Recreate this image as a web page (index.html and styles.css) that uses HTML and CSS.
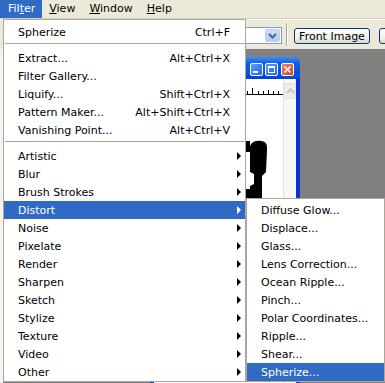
FILE: index.html
```html
<!DOCTYPE html>
<html>
<head>
<meta charset="utf-8">
<link rel="stylesheet" href="styles.css">
</head>
<body>
<div class="menubar">
  <span class="mb-item active">Fil<u>t</u>er</span>
  <span class="mb-item"><u>V</u>iew</span>
  <span class="mb-item"><u>W</u>indow</span>
  <span class="mb-item"><u>H</u>elp</span>
</div>
<div class="toolbar">
  <div class="combo">
    <div class="combo-btn">
      <svg width="9" height="6" viewBox="0 0 9 6"><path d="M1 1 L4.5 4.5 L8 1" fill="none" stroke="#4d6185" stroke-width="2"/></svg>
    </div>
  </div>
  <div class="tb-sep"></div>
  <button class="xpbtn front">Front Image</button>
  <button class="xpbtn clear"></button>
</div>
<div class="workspace">
  <div class="leftdoc"></div>
  <div class="docwin">
    <div class="titlebar">
      <span class="cap-btn min"><svg width="13" height="13" viewBox="0 0 13 13"><rect x="3" y="8" width="5" height="2" fill="#fff"/></svg></span>
      <span class="cap-btn max"><svg width="13" height="13" viewBox="0 0 13 13"><rect x="3.5" y="3.5" width="6" height="6" fill="none" stroke="#fff" stroke-width="1"/><rect x="3" y="3" width="7" height="2" fill="#fff"/></svg></span>
      <span class="cap-btn close"><svg width="13" height="13" viewBox="0 0 13 13"><path d="M3.5 3.5 L9.5 9.5 M9.5 3.5 L3.5 9.5" stroke="#fff" stroke-width="1.6"/></svg></span>
    </div>
    <div class="docbody">
      <div class="canvas">
        <svg class="art" width="129" height="130" viewBox="0 0 129 130">
          <path d="M0 15.5 H129" stroke="#000" stroke-width="1"/>
          <path d="M98.5 9 V15 M104.5 12 V15 M109.5 12 V15 M114.5 11 V15 M119.5 12 V15 M124.5 12 V15 M93.5 12 V15 M88.5 12 V15" stroke="#000" stroke-width="1"/>
          <path d="M96 67 Q98 61 108 62 Q114 63 113 71 L112 93 L108 97 L108 122 L96 122 L96 107 L100 105 L100 95 L96 93 Z" fill="#000"/>
          <path d="M92 62 L96 62 L96 73 L92 73 Z M92 110 L96 110 L96 120 L92 120 Z" fill="#000"/>
        </svg>
      </div>
      <div class="vscroll">
        <div class="sb-up"><svg width="9" height="6" viewBox="0 0 9 6"><path d="M1 5 L4.5 1.5 L8 5" fill="none" stroke="#c3c3bd" stroke-width="2"/></svg></div>
      </div>
    </div>
  </div>
</div>

<div class="menu main">
  <div class="item"><span class="label">Spherize</span><span class="key">Ctrl+F</span></div>
  <div class="sep"></div>
  <div class="item"><span class="label">Extract...</span><span class="key">Alt+Ctrl+X</span></div>
  <div class="item"><span class="label">Filter Gallery...</span></div>
  <div class="item"><span class="label">Liquify...</span><span class="key">Shift+Ctrl+X</span></div>
  <div class="item"><span class="label">Pattern Maker...</span><span class="key">Alt+Shift+Ctrl+X</span></div>
  <div class="item"><span class="label">Vanishing Point...</span><span class="key">Alt+Ctrl+V</span></div>
  <div class="sep"></div>
  <div class="item"><span class="label">Artistic</span><span class="arrow"></span></div>
  <div class="item"><span class="label">Blur</span><span class="arrow"></span></div>
  <div class="item"><span class="label">Brush Strokes</span><span class="arrow"></span></div>
  <div class="item hl"><span class="label">Distort</span><span class="arrow"></span></div>
  <div class="item"><span class="label">Noise</span><span class="arrow"></span></div>
  <div class="item"><span class="label">Pixelate</span><span class="arrow"></span></div>
  <div class="item"><span class="label">Render</span><span class="arrow"></span></div>
  <div class="item"><span class="label">Sharpen</span><span class="arrow"></span></div>
  <div class="item"><span class="label">Sketch</span><span class="arrow"></span></div>
  <div class="item"><span class="label">Stylize</span><span class="arrow"></span></div>
  <div class="item"><span class="label">Texture</span><span class="arrow"></span></div>
  <div class="item"><span class="label">Video</span><span class="arrow"></span></div>
  <div class="item"><span class="label">Other</span><span class="arrow"></span></div>
</div>

<div class="menu sub">
  <div class="item"><span class="label">Diffuse Glow...</span></div>
  <div class="item"><span class="label">Displace...</span></div>
  <div class="item"><span class="label">Glass...</span></div>
  <div class="item"><span class="label">Lens Correction...</span></div>
  <div class="item"><span class="label">Ocean Ripple...</span></div>
  <div class="item"><span class="label">Pinch...</span></div>
  <div class="item"><span class="label">Polar Coordinates...</span></div>
  <div class="item"><span class="label">Ripple...</span></div>
  <div class="item"><span class="label">Shear...</span></div>
  <div class="item hl"><span class="label">Spherize...</span></div>
</div>
</body>
</html>
```

FILE: styles.css
```css
html, body {
  margin: 0;
  padding: 0;
}
body {
  width: 385px;
  height: 383px;
  overflow: hidden;
  position: relative;
  background: #808080;
  font-family: "DejaVu Sans", "Noto Sans", sans-serif;
  font-size: 11px;
  color: #000;
}

/* menu bar */
.menubar {
  height: 18px;
  background: #ece9d8;
  border-bottom: 1px solid #d4d0c0;
  display: flex;
}
.mb-item {
  line-height: 18px;
  padding: 0 7px;
  white-space: nowrap;
}
.mb-item:first-child {
  padding-left: 8px;
}
.mb-item u {
  text-decoration: underline;
  text-underline-offset: 1px;
}
.mb-item.active {
  background: #316ac5;
  color: #fff;
}

/* toolbar */
.toolbar {
  height: 29px;
  background: #ece9d8;
  border-top: 1px solid #fff;
  display: flex;
  align-items: flex-start;
  overflow: hidden;
}
.toolbar > * {
  flex-shrink: 0;
}
.combo {
  margin-left: 170px;
  margin-top: 7px;
  width: 112px;
  height: 17px;
  box-sizing: border-box;
  border: 1px solid #7f9db9;
  background: #fff;
  display: flex;
  justify-content: flex-end;
  padding: 1px;
}
.combo-btn {
  width: 15px;
  height: 13px;
  border-radius: 2px;
  background: linear-gradient(#cbdcfd, #b5cbf7);
  border: 1px solid #b9cdf9;
  box-sizing: border-box;
  display: flex;
  align-items: center;
  justify-content: center;
}
.tb-sep {
  margin-left: 4px;
  margin-top: 3px;
  width: 1px;
  height: 23px;
  background: #aca899;
  border-right: 1px solid #fff;
}
.xpbtn {
  margin-top: 8px;
  height: 16px;
  box-sizing: border-box;
  border: 1px solid #003c74;
  border-radius: 3px;
  background: linear-gradient(#ffffff, #f3f2ed 60%, #dcd8cc);
  font-family: "DejaVu Sans", "Noto Sans", sans-serif;
  font-size: 11px;
  color: #000;
  padding: 0;
  line-height: 13px;
  white-space: nowrap;
}
.xpbtn.front {
  margin-left: 6px;
  width: 76px;
}
.xpbtn.clear {
  margin-left: 9px;
  width: 60px;
}

/* workspace */
.workspace {
  position: relative;
  height: 334px;
  background: #808080;
  overflow: hidden;
}
.leftdoc {
  position: absolute;
  left: 0;
  top: 0;
  width: 3px;
  height: 334px;
  background: #f4f3ee;
}
.docwin {
  position: absolute;
  left: 150px;
  top: 8px;
  width: 150px;
  height: 400px;
  box-sizing: border-box;
  background: linear-gradient(90deg, #0042d6, #0054e3 70%, #0831d9);
  border-radius: 7px 7px 0 0;
  padding: 0 4px 4px 4px;
}
.titlebar {
  height: 22px;
  display: flex;
  justify-content: flex-end;
  align-items: flex-start;
  padding-top: 6px;
  box-sizing: border-box;
  background: linear-gradient(#3d8cf7, #0a5fe8 30%, #0050e0 80%, #0046d4);
  margin: 0 -4px;
  padding-right: 6px;
  border-radius: 7px 7px 0 0;
}
.cap-btn {
  width: 13px;
  height: 13px;
  box-sizing: border-box;
  border: 1px solid #fff;
  border-radius: 2px;
  display: block;
  background: linear-gradient(135deg, #5a9bff, #2463e8);
  overflow: hidden;
}
.cap-btn svg {
  display: block;
  margin: -1px;
}
.cap-btn.max {
  margin-left: 2px;
}
.cap-btn.close {
  margin-left: 3px;
  background: linear-gradient(135deg, #ed8466, #d4431e);
}
.docbody {
  display: flex;
  height: 370px;
}
.canvas {
  flex: 1;
  background: #fff;
  overflow: hidden;
}
.art {
  display: block;
}
.vscroll {
  width: 13px;
  background: #f7f7f3;
  border-left: 1px solid #e4e2da;
  box-sizing: border-box;
  padding-top: 4px;
}
.sb-up {
  height: 14px;
  border: 1px solid #e3e1d9;
  border-radius: 2px;
  background: #eeede6;
  display: flex;
  align-items: center;
  justify-content: center;
}

/* menus */
.menu {
  position: absolute;
  background: #fff;
  border: 1px solid #aca899;
  box-sizing: border-box;
}
.menu.main {
  left: 3px;
  top: 19px;
  width: 243px;
  padding-top: 3px;
}
.menu.sub {
  left: 246px;
  top: 198px;
  width: 139px;
  padding-top: 2px;
}
.item {
  height: 18px;
  display: flex;
  align-items: center;
  padding-left: 14px;
}
.item .label {
  flex: 1;
  white-space: nowrap;
}
.item .key {
  margin-right: 15px;
  white-space: nowrap;
}
.item .arrow {
  width: 0;
  height: 0;
  border-left: 4px solid #000;
  border-top: 4px solid transparent;
  border-bottom: 4px solid transparent;
  margin-right: 4px;
}
.item.hl {
  background: #316ac5;
  color: #fff;
}
.item.hl .arrow {
  border-left-color: #fff;
}
.sep {
  height: 8px;
  box-sizing: border-box;
  padding-top: 2px;
  margin-left: 1px;
}
.sep::before {
  content: "";
  display: block;
  height: 1px;
  background: #aca899;
}
```
